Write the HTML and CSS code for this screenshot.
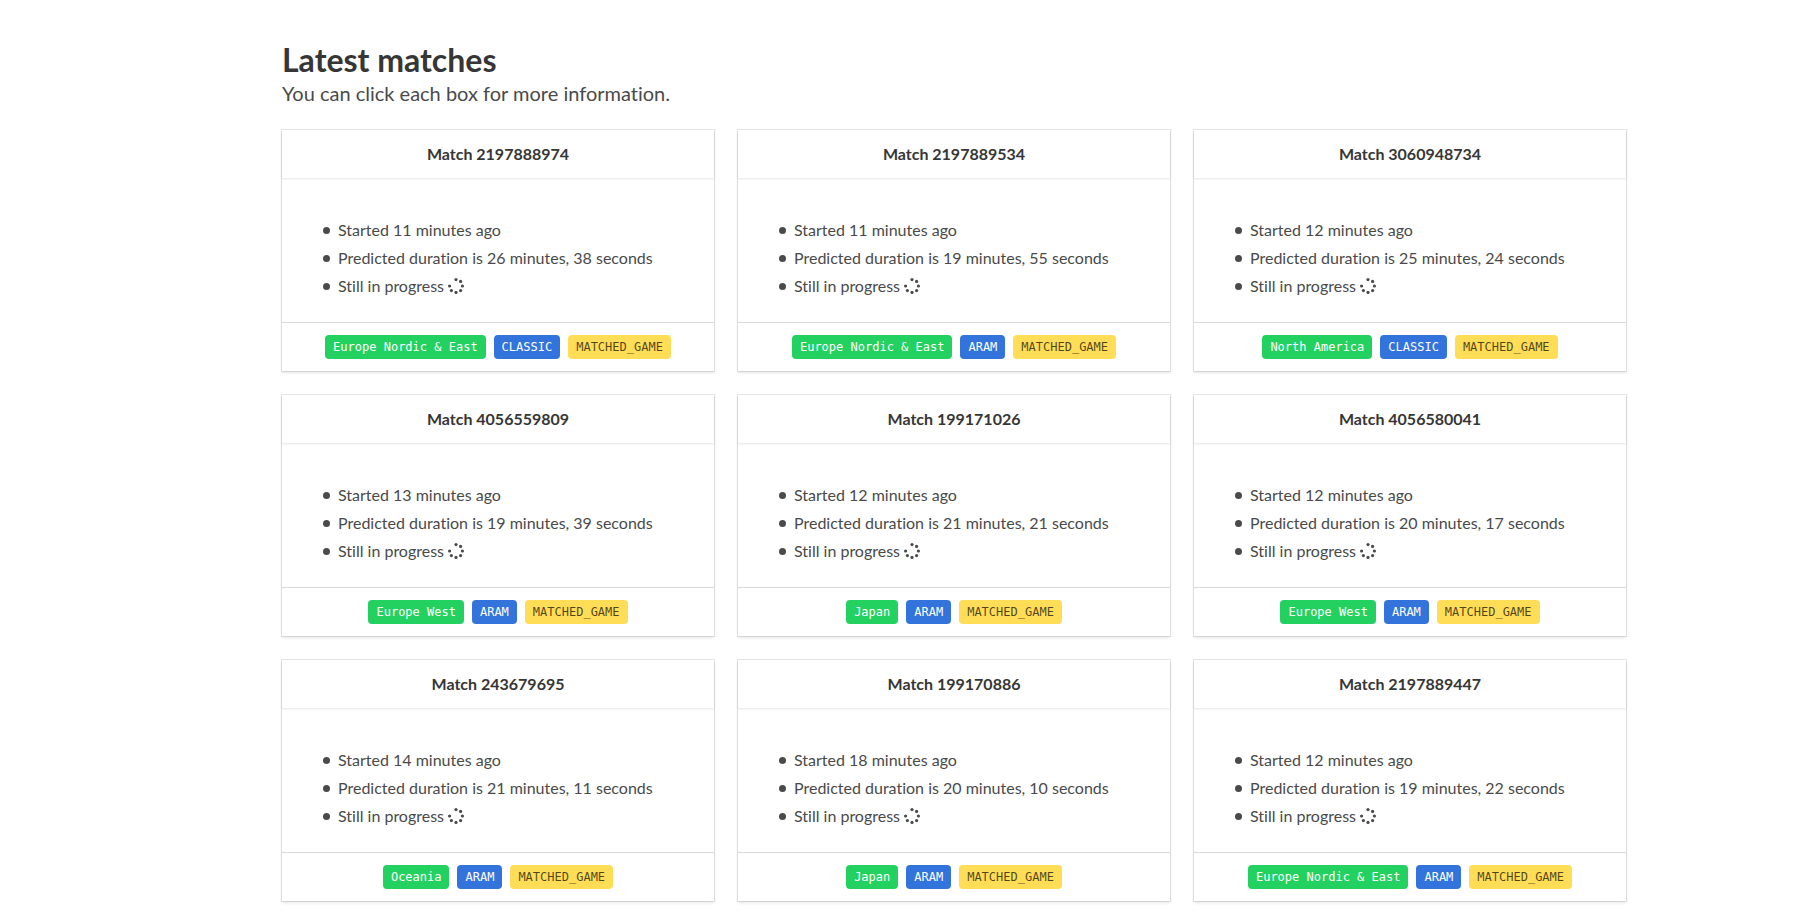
FILE: index.html
```html
<!DOCTYPE html>
<html lang="en">
<head>
<meta charset="utf-8">
<meta name="viewport" content="width=device-width, initial-scale=1">
<title>Latest matches</title>
<link rel="stylesheet" href="styles.css">
</head>
<body>
<svg class="sprite" aria-hidden="true">
  <symbol id="spinner" viewBox="0 0 16 16">
    <circle cx="8" cy="1.6" r="1.6"/><circle cx="12.6" cy="3.4" r="1.6"/><circle cx="14.4" cy="8" r="1.6"/><circle cx="12.6" cy="12.6" r="1.6"/><circle cx="8" cy="14.4" r="1.6"/><circle cx="3.4" cy="12.6" r="1.6"/><circle cx="1.6" cy="8" r="1.6"/>
  </symbol>
</svg>
<main class="page">
  <div class="container">
    <h1 class="title">Latest matches</h1>
    <p class="subtitle">You can click each box for more information.</p>
    <div class="matches">
      <a class="card" href="#2197888974">
        <h2 class="card-header">Match 2197888974</h2>
        <ul class="card-content">
          <li>Started 11 minutes ago</li>
          <li>Predicted duration is 26 minutes, 38 seconds</li>
          <li>Still in progress <svg class="icon"><use href="#spinner"/></svg></li>
        </ul>
        <div class="card-footer"><span class="tag region">Europe Nordic &amp; East</span><span class="tag mode">CLASSIC</span><span class="tag type">MATCHED_GAME</span></div>
      </a>
      <a class="card" href="#2197889534">
        <h2 class="card-header">Match 2197889534</h2>
        <ul class="card-content">
          <li>Started 11 minutes ago</li>
          <li>Predicted duration is 19 minutes, 55 seconds</li>
          <li>Still in progress <svg class="icon"><use href="#spinner"/></svg></li>
        </ul>
        <div class="card-footer"><span class="tag region">Europe Nordic &amp; East</span><span class="tag mode">ARAM</span><span class="tag type">MATCHED_GAME</span></div>
      </a>
      <a class="card" href="#3060948734">
        <h2 class="card-header">Match 3060948734</h2>
        <ul class="card-content">
          <li>Started 12 minutes ago</li>
          <li>Predicted duration is 25 minutes, 24 seconds</li>
          <li>Still in progress <svg class="icon"><use href="#spinner"/></svg></li>
        </ul>
        <div class="card-footer"><span class="tag region">North America</span><span class="tag mode">CLASSIC</span><span class="tag type">MATCHED_GAME</span></div>
      </a>
      <a class="card" href="#4056559809">
        <h2 class="card-header">Match 4056559809</h2>
        <ul class="card-content">
          <li>Started 13 minutes ago</li>
          <li>Predicted duration is 19 minutes, 39 seconds</li>
          <li>Still in progress <svg class="icon"><use href="#spinner"/></svg></li>
        </ul>
        <div class="card-footer"><span class="tag region">Europe West</span><span class="tag mode">ARAM</span><span class="tag type">MATCHED_GAME</span></div>
      </a>
      <a class="card" href="#199171026">
        <h2 class="card-header">Match 199171026</h2>
        <ul class="card-content">
          <li>Started 12 minutes ago</li>
          <li>Predicted duration is 21 minutes, 21 seconds</li>
          <li>Still in progress <svg class="icon"><use href="#spinner"/></svg></li>
        </ul>
        <div class="card-footer"><span class="tag region">Japan</span><span class="tag mode">ARAM</span><span class="tag type">MATCHED_GAME</span></div>
      </a>
      <a class="card" href="#4056580041">
        <h2 class="card-header">Match 4056580041</h2>
        <ul class="card-content">
          <li>Started 12 minutes ago</li>
          <li>Predicted duration is 20 minutes, 17 seconds</li>
          <li>Still in progress <svg class="icon"><use href="#spinner"/></svg></li>
        </ul>
        <div class="card-footer"><span class="tag region">Europe West</span><span class="tag mode">ARAM</span><span class="tag type">MATCHED_GAME</span></div>
      </a>
      <a class="card" href="#243679695">
        <h2 class="card-header">Match 243679695</h2>
        <ul class="card-content">
          <li>Started 14 minutes ago</li>
          <li>Predicted duration is 21 minutes, 11 seconds</li>
          <li>Still in progress <svg class="icon"><use href="#spinner"/></svg></li>
        </ul>
        <div class="card-footer"><span class="tag region">Oceania</span><span class="tag mode">ARAM</span><span class="tag type">MATCHED_GAME</span></div>
      </a>
      <a class="card" href="#199170886">
        <h2 class="card-header">Match 199170886</h2>
        <ul class="card-content">
          <li>Started 18 minutes ago</li>
          <li>Predicted duration is 20 minutes, 10 seconds</li>
          <li>Still in progress <svg class="icon"><use href="#spinner"/></svg></li>
        </ul>
        <div class="card-footer"><span class="tag region">Japan</span><span class="tag mode">ARAM</span><span class="tag type">MATCHED_GAME</span></div>
      </a>
      <a class="card" href="#2197889447">
        <h2 class="card-header">Match 2197889447</h2>
        <ul class="card-content">
          <li>Started 12 minutes ago</li>
          <li>Predicted duration is 19 minutes, 22 seconds</li>
          <li>Still in progress <svg class="icon"><use href="#spinner"/></svg></li>
        </ul>
        <div class="card-footer"><span class="tag region">Europe Nordic &amp; East</span><span class="tag mode">ARAM</span><span class="tag type">MATCHED_GAME</span></div>
      </a>
    </div>
  </div>
</main>
</body>
</html>
```
FILE: styles.css
```css
* { box-sizing: border-box; margin: 0; padding: 0; }
body {
  background: #fff;
  color: #4a4a4a;
  font-family: Lato, "Noto Sans", sans-serif;
  font-size: 16px;
  font-variant-ligatures: none;
  line-height: 24px;
}
.sprite { display: none; }
.page { padding: 40px 0 12px 98px; }
.container { max-width: 1344px; margin: 0 auto; }
.title { color: #363636; font-size: 32px; font-weight: 700; line-height: 40px; }
.subtitle { font-size: 20px; line-height: 26px; margin-bottom: 24px; }
.matches {
  display: grid;
  grid-template-columns: repeat(auto-fit, minmax(400px, 1fr));
  gap: 24px;
}
.card {
  display: block;
  color: inherit;
  text-decoration: none;
  box-shadow: 0 2px 3px rgba(10, 10, 10, .1), 0 0 0 1px rgba(10, 10, 10, .1);
}
.card-header {
  padding: 12px;
  color: #363636;
  font-size: 16px;
  font-weight: 700;
  line-height: 24px;
  text-align: center;
  box-shadow: 0 1px 2px rgba(10, 10, 10, .1);
}
.card-content { padding: 40px 24px 24px 56px; list-style: none; }
.card-content li + li { margin-top: 4px; }
.card-content li::before {
  content: "";
  display: inline-block;
  width: 7px;
  height: 7px;
  margin: 0 8px 0 -15px;
  border-radius: 50%;
  background: currentColor;
  vertical-align: 2px;
}
.icon { width: 16px; height: 16px; fill: currentColor; vertical-align: -2px; }
.card-footer {
  display: flex;
  justify-content: center;
  gap: 8px;
  padding: 12px;
  border-top: 1px solid #dbdbdb;
}
.tag {
  padding: 0 8px;
  border-radius: 4px;
  font: 12px/24px "DejaVu Sans Mono", monospace;
  white-space: nowrap;
}
.region { background: #23d160; color: #fff; }
.mode { background: #3273dc; color: #fff; }
.type { background: #ffdd57; color: rgba(0, 0, 0, .7); }
```
